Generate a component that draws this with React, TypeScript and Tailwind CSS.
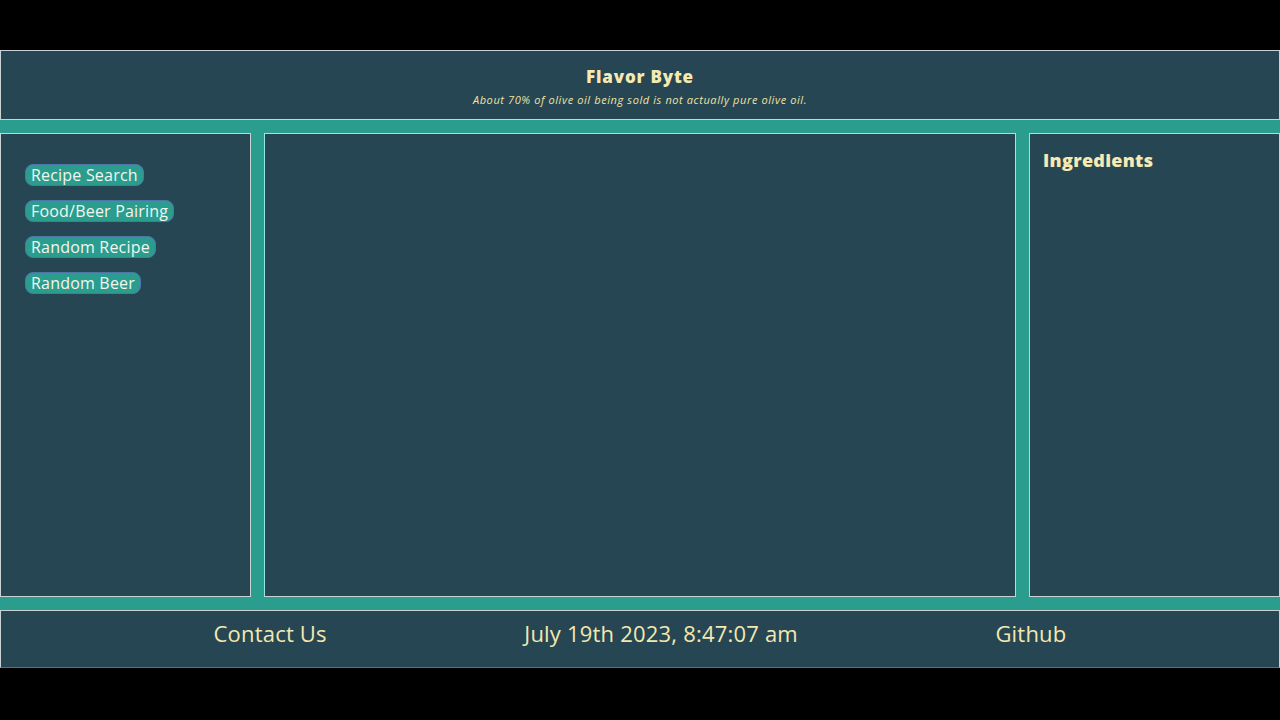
import React from 'react';

const navItems = ['Recipe Search', 'Food/Beer Pairing', 'Random Recipe', 'Random Beer'];

const font = { fontFamily: '"Open Sans", "Noto Sans", sans-serif' };

const App: React.FC = () => {
  return (
    <div className="w-[1280px] h-[720px] bg-black pt-[50px]" style={font}>
      <div className="flex flex-col gap-[13px] bg-[#2a9d8f]">
        <header className="h-[70px] bg-[#264653] border border-[#c9d3d6] flex flex-col items-center justify-center pt-[4px]">
          <h1 className="text-[17px] font-extrabold text-[#f6eab2] leading-tight tracking-[0.8px]">Flavor Byte</h1>
          <p className="text-[11px] italic text-[#efe2a2] mt-[5px] tracking-[0.6px]">
            About 70% of olive oil being sold is not actually pure olive oil.
          </p>
        </header>

        <main className="h-[464px] grid grid-cols-[251px_1fr_251px] gap-[13px]">
          <aside className="bg-[#264653] border border-[#c9d3d6] pl-6 pt-[30px]">
            <ul className="flex flex-col items-start gap-[14px]">
              {navItems.map(item => (
                <li key={item} className="flex">
                  <button className="h-[22px] px-[5px] rounded-lg bg-[#2a9d8f] border border-[#4f74a8] text-[16px] tracking-[0.2px] text-[#f4f6ee] leading-none font-medium">
                    {item}
                  </button>
                </li>
              ))}
            </ul>
          </aside>

          <section className="bg-[#264653] border border-[#c9d3d6] border-l-[#8fe9e0]"></section>

          <aside className="bg-[#264653] border border-[#c9d3d6] border-l-[#8fe9e0] px-[13px] pt-[13px]">
            <h2 className="text-[18px] tracking-[0.3px] font-extrabold text-[#f6eab2]">Ingredients</h2>
          </aside>
        </main>

        <footer className="h-[58px] bg-[#264653] border border-[#c9d3d6] border-b-[#6b6b6b] flex items-center justify-evenly px-[15px] pb-[11px] text-[22px] tracking-[0.2px] text-[#f4e8b0]">
          <span>Contact Us</span>
          <span>July 19th 2023, 8:47:07 am</span>
          <span>Github</span>
        </footer>
      </div>
    </div>
  );
};

export default App;
